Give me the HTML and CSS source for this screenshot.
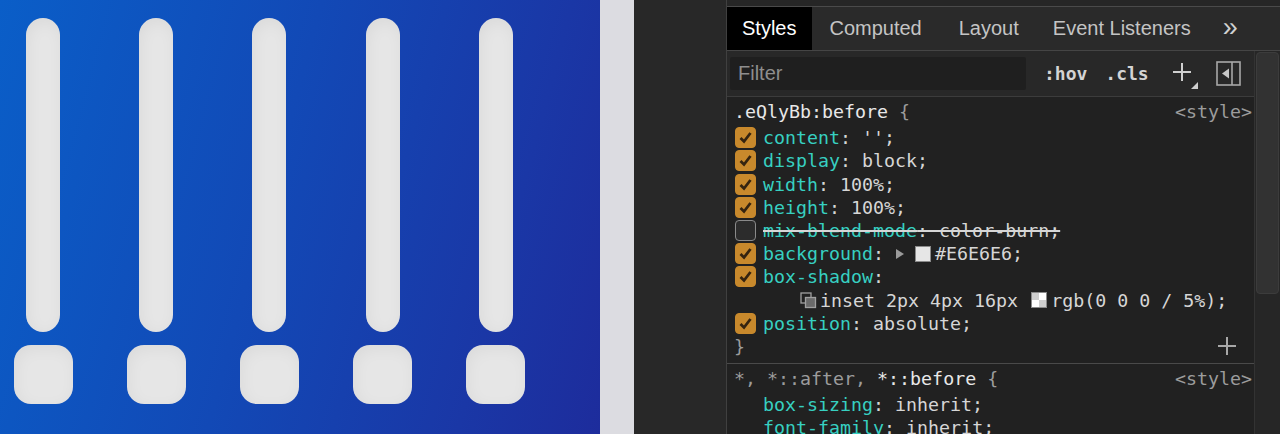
FILE: index.html
```html
<!DOCTYPE html>
<html lang="en">
<head>
    <meta charset="UTF-8">
    <title>Sliders - Styles</title>
    <link rel="stylesheet" href="styles.css">
</head>
<body>
    <div class="screen">
        <!-- Page preview -->
        <div class="stage">
            <div class="slider"><div class="track"></div><div class="knob"></div></div>
            <div class="slider"><div class="track"></div><div class="knob"></div></div>
            <div class="slider"><div class="track"></div><div class="knob"></div></div>
            <div class="slider"><div class="track"></div><div class="knob"></div></div>
            <div class="slider"><div class="track"></div><div class="knob"></div></div>
        </div>
        <div class="gutter"></div>
        <div class="dock"></div>

        <!-- DevTools sidebar -->
        <div class="devtools">
            <div class="crumbs"></div>
            <div class="tabs">
                <div class="tab active">Styles</div>
                <div class="tab computed">Computed</div>
                <div class="tab">Layout</div>
                <div class="tab">Event Listeners</div>
                <div class="tab more">&raquo;</div>
            </div>
            <div class="panel">
                <div class="main">
                    <div class="toolbar">
                        <div class="filter">Filter</div>
                        <span class="tool">:hov</span>
                        <span class="tool">.cls</span>
                        <svg class="add-rule" width="28" height="30" viewBox="0 0 28 30">
                            <path d="M10 2 V20 M1 11 H19" stroke="#cfcfcf" stroke-width="2"/>
                            <path d="M26 21 V28 H19 Z" fill="#cfcfcf"/>
                        </svg>
                        <svg class="toggle" width="25" height="25" viewBox="0 0 25 25">
                            <rect x="1" y="1" width="23" height="23" fill="none" stroke="#a8a8a8" stroke-width="1.6"/>
                            <path d="M16 1 V24" stroke="#a8a8a8" stroke-width="1.6"/>
                            <path d="M13 7.5 V17.5 L6 12.5 Z" fill="#c8c8c8"/>
                        </svg>
                    </div>

                    <div class="rule first">
                        <div class="line header">
                            <span><span class="sel">.eQlyBb:before</span> <span class="brace">{</span></span>
                            <span class="source">&lt;style&gt;</span>
                        </div>
                        <div class="line"><span class="check on"></span><span class="prop">content</span>: '';</div>
                        <div class="line"><span class="check on"></span><span class="prop">display</span>: block;</div>
                        <div class="line"><span class="check on"></span><span class="prop">width</span>: 100%;</div>
                        <div class="line"><span class="check on"></span><span class="prop">height</span>: 100%;</div>
                        <div class="line"><span class="check"></span><span class="struck"><span class="prop">mix-blend-mode</span>: color-burn;</span></div>
                        <div class="line"><span class="check on"></span><span class="prop">background</span>: <span class="expand"></span><span class="swatch"></span>#E6E6E6;</div>
                        <div class="line"><span class="check on"></span><span class="prop">box-shadow</span>:</div>
                        <div class="line cont"><svg class="shadow-icon" width="17" height="17" viewBox="0 0 17 17">
                                <rect x="1" y="1" width="10" height="10" fill="none" stroke="#a0a0a0" stroke-width="1.3"/>
                                <rect x="5.5" y="5.5" width="10" height="10" fill="#6a6a6a" stroke="#a0a0a0" stroke-width="1.3"/>
                            </svg>inset 2px 4px 16px <span class="swatch checker"></span>rgb(0 0 0 / 5%);</div>
                        <div class="line"><span class="check on"></span><span class="prop">position</span>: absolute;</div>
                        <div class="line closing">
                            <span class="brace">}</span>
                            <svg class="add-prop" width="20" height="20" viewBox="0 0 20 20">
                                <path d="M10 1 V19 M1 10 H19" stroke="#a8a8a8" stroke-width="2"/>
                            </svg>
                        </div>
                    </div>

                    <div class="rule">
                        <div class="line header">
                            <span><span class="dim">*, *::after,</span> <span class="sel">*::before</span> <span class="brace">{</span></span>
                            <span class="source">&lt;style&gt;</span>
                        </div>
                        <div class="line plain"><span class="prop">box-sizing</span>: inherit;</div>
                        <div class="line plain"><span class="prop">font-family</span>: inherit;</div>
                    </div>
                </div>
                <div class="scrollbar"><div class="thumb"></div></div>
            </div>
        </div>
    </div>
</body>
</html>
```

FILE: styles.css
```css
body {
    margin: 0;
    background-color: #202020;
    overflow: hidden;
}

.screen {
    display: flex;
    height: 434px;
    overflow: hidden;
}

/* Page preview with the five sliders */
.stage {
    width: 600px;
    flex-shrink: 0;
    display: flex;
    gap: 54.2px;
    padding-left: 13.5px;
    box-sizing: border-box;
    background: linear-gradient(105deg, #0a5ec8 0%, #1249b6 45%, #1a37a6 80%, #1d2c9c 100%);
}

.slider {
    width: 59px;
    display: flex;
    flex-direction: column;
    align-items: center;
}

.track {
    width: 34px;
    height: 314px;
    margin-top: 18px;
    border-radius: 17px;
    background-color: #e6e6e6;
    box-shadow: inset 2px 4px 16px rgb(0 0 0 / 5%);
}

.knob {
    width: 59px;
    height: 59px;
    margin-top: 13px;
    border-radius: 17px;
    background-color: #e6e6e6;
    box-shadow: inset 2px 4px 16px rgb(0 0 0 / 5%);
}

.gutter {
    width: 34px;
    flex-shrink: 0;
    background-color: #dcdce1;
}

.dock {
    width: 92px;
    flex-shrink: 0;
    background-color: #282828;
}

/* DevTools */
.devtools {
    flex: 1;
    min-width: 0;
    display: flex;
    flex-direction: column;
    border-left: 1px solid #404040;
    background-color: #212121;
    font-family: "Liberation Sans", Arial, sans-serif;
}

.crumbs {
    height: 6px;
    background-color: #262626;
    border-bottom: 1px solid #4a4a4a;
}

.tabs {
    height: 43px;
    display: flex;
    align-items: stretch;
    background-color: #2a2a2a;
    border-bottom: 1px solid #454545;
}

.tab {
    display: flex;
    align-items: center;
    padding: 0 17px;
    font-size: 20px;
    color: #c4c4c4;
}

.tab.active {
    padding: 0 16px 0 15px;
    background-color: #000;
    color: #fff;
}

.tab.computed {
    padding-right: 20px;
}

.tab.more {
    padding: 0 0 3px 15px;
    font-size: 27px;
    color: #d0d0d0;
}

.panel {
    flex: 1;
    display: flex;
    min-height: 0;
}

.main {
    flex: 1;
    min-width: 0;
}

.toolbar {
    height: 45px;
    display: flex;
    align-items: center;
    padding-left: 3px;
    background-color: #282828;
    border-bottom: 1px solid #3c3c3c;
}

.filter {
    width: 288px;
    height: 33px;
    line-height: 33px;
    padding-left: 8px;
    margin-right: 18px;
    border-radius: 2px;
    background-color: #1f1f1f;
    color: #8e8e8e;
    font-size: 20px;
}

.tool {
    font-family: "DejaVu Sans Mono", monospace;
    font-size: 18px;
    font-weight: bold;
    color: #d4d4d4;
    margin-right: 18px;
}

.add-rule {
    margin-left: 5px;
    margin-top: 4px;
}

.toggle {
    margin-left: 16px;
}

/* Style rules */
.rule {
    padding: 3px 0 5px 7px;
    font-family: "DejaVu Sans Mono", monospace;
    font-size: 18.3px;
    color: #d6d6d6;
}

.rule.first {
    border-bottom: 1px solid #4a4a4a;
}

.rule + .rule {
    padding-top: 3px;
}

.line {
    height: 23.2px;
    line-height: 23.2px;
    white-space: nowrap;
}

.line.header,
.line.closing {
    display: flex;
    align-items: center;
    justify-content: space-between;
}

.line.header {
    margin-bottom: 3px;
    padding-right: 2px;
}

.line.closing {
    padding-right: 17px;
}

.sel {
    color: #e8e8e8;
}

.dim,
.brace,
.source {
    color: #9c9c9c;
}

.prop {
    color: #37d0c1;
}

.check {
    display: inline-block;
    vertical-align: middle;
    width: 19px;
    height: 19px;
    margin: -3px 7px 0 1px;
    border-radius: 4px;
    border: 1px solid #8a8a8a;
    background-color: #2c2c2c;
}

.check.on {
    border-color: #c8892c;
    background-color: #c8892c;
    background-image: url("data:image/svg+xml,%3Csvg xmlns='http://www.w3.org/2000/svg' viewBox='0 0 19 19'%3E%3Cpath d='M4.5 10 L8 13.5 L14.5 5' fill='none' stroke='%23352410' stroke-width='2.8'/%3E%3C/svg%3E");
}

.struck {
    text-decoration: line-through;
    text-decoration-color: #d6d6d6;
    text-decoration-thickness: 2px;
}

.expand {
    display: inline-block;
    vertical-align: middle;
    width: 0;
    height: 0;
    margin: -3px 11px 0 1px;
    border-top: 5px solid transparent;
    border-bottom: 5px solid transparent;
    border-left: 8px solid #9a9a9a;
}

.swatch {
    display: inline-block;
    vertical-align: middle;
    width: 14px;
    height: 14px;
    margin: -3px 4px 0 0;
    border: 1px solid #8a8a8a;
    background-color: #e6e6e6;
}

.swatch.checker {
    margin-left: 2px;
    background: conic-gradient(#fff 25%, #cfcfcf 0 50%, #fff 0 75%, #cfcfcf 0) 0 0 / 14px 14px;
}

.line.cont {
    padding-left: 66px;
}

.shadow-icon {
    vertical-align: middle;
    margin: -3px 3px 0 0;
}

.line.plain {
    padding-left: 29px;
}

.scrollbar {
    width: 23px;
    flex-shrink: 0;
    border-left: 1px solid #333;
    background-color: #262626;
    padding: 1px 1px 0 1px;
}

.thumb {
    height: 240px;
    border-radius: 4px;
    background-color: #323232;
    border: 1px solid #3c3c3c;
}
```
